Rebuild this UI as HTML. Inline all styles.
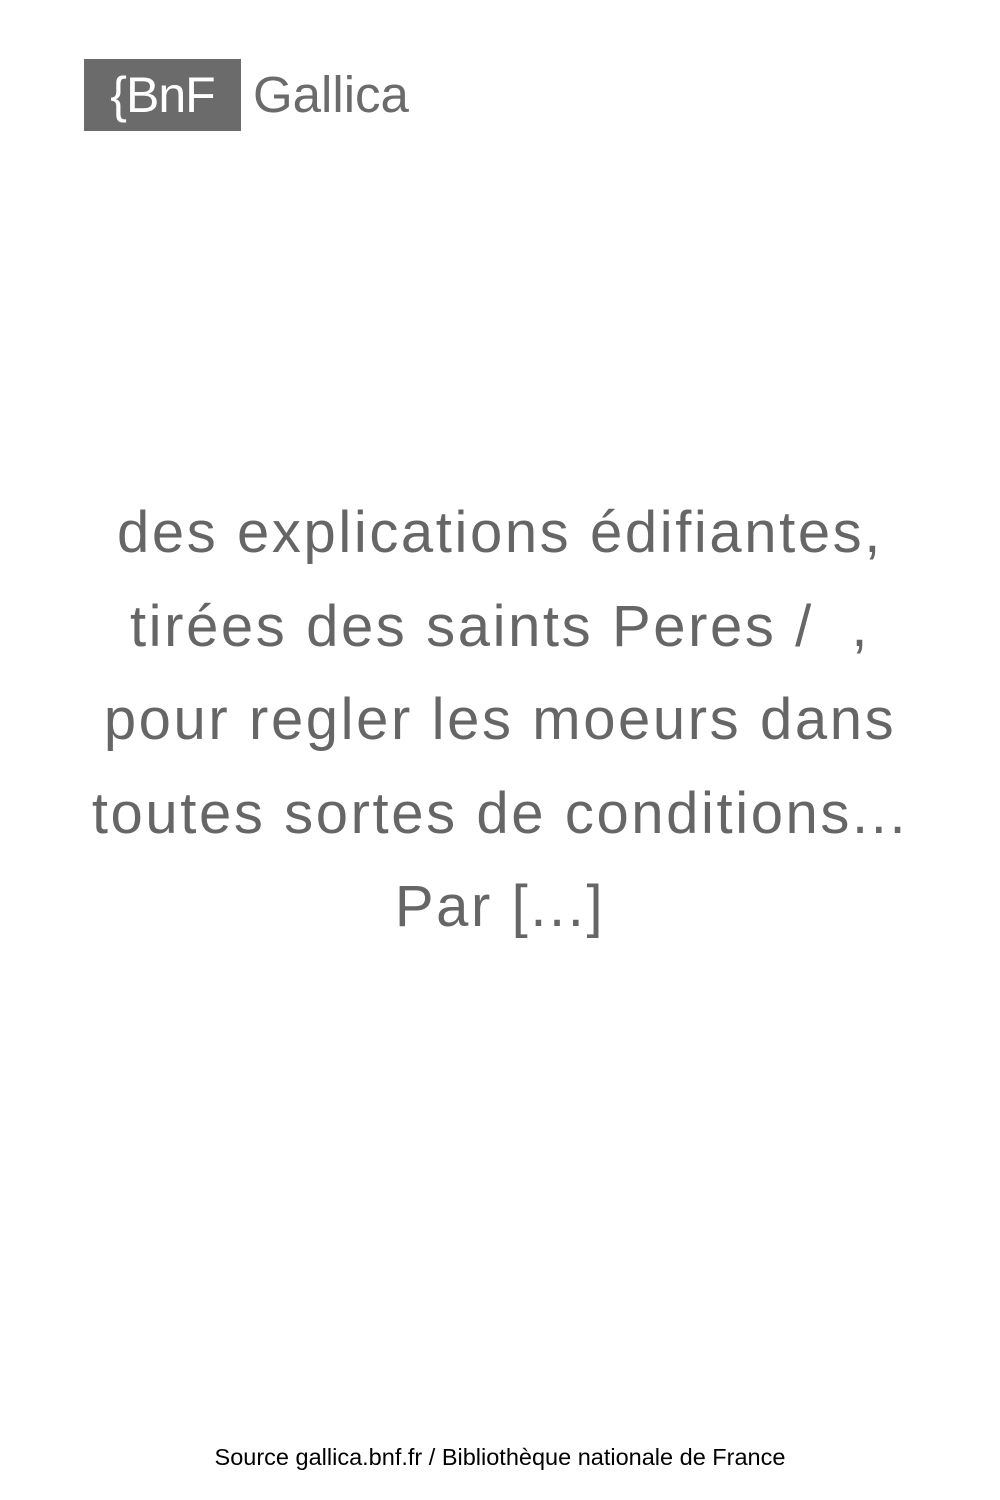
<!DOCTYPE html>
<html><head><meta charset="utf-8"><style>
body{margin:0;width:1000px;height:1500px;background:#fff;position:relative;font-family:"Liberation Sans",sans-serif;overflow:hidden}
.box{position:absolute;left:84px;top:59px;width:157px;height:72px;background:#6b6b6b;color:#fff;font-size:50px;line-height:72px;text-align:center;letter-spacing:-1px}
.gal{position:absolute;left:253px;top:59px;line-height:72px;font-size:51px;color:#6b6b6b}
.t{position:absolute;left:0;width:1000px;top:486px;text-align:center;color:#666;font-size:58px;line-height:93.5px;letter-spacing:2.6px}
.f{position:absolute;left:0;width:1000px;top:1444px;text-align:center;font-size:23.5px;color:#000}
</style></head><body>
<div class="box">{BnF</div><div class="gal">Gallica</div>
<div class="t">des explications édifiantes,<br>tirées des saints Peres /&nbsp; ,<br>pour regler les moeurs dans<br>toutes sortes de conditions...<br>Par [...]</div>
<div class="f">Source gallica.bnf.fr / Bibliothèque nationale de France</div>
</body></html>
